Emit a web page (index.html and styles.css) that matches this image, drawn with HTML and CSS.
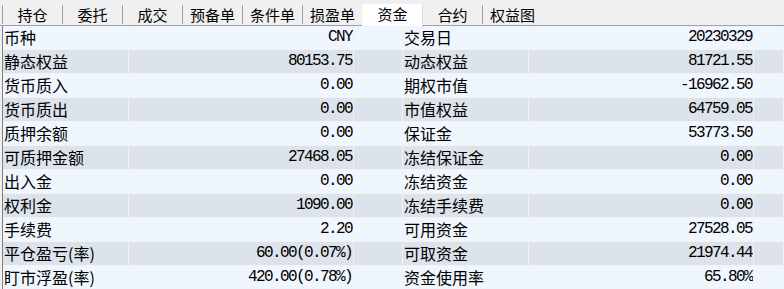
FILE: index.html
```html
<!DOCTYPE html>
<html lang="zh">
<head>
  <meta charset="UTF-8">
  <title>资金</title>
  <link rel="stylesheet" href="styles.css">
</head>
<body>
  <nav class="tabs">
    <a class="tab">持仓</a>
    <a class="tab">委托</a>
    <a class="tab">成交</a>
    <a class="tab">预备单</a>
    <a class="tab">条件单</a>
    <a class="tab">损盈单</a>
    <a class="tab active">资金</a>
    <a class="tab">合约</a>
    <a class="tab">权益图</a>
  </nav>

  <div class="panel" id="funds"></div>

  <script>
    const rows = [
      ['币种', 'CNY', '交易日', '20230329'],
      ['静态权益', '80153.75', '动态权益', '81721.55'],
      ['货币质入', '0.00', '期权市值', '-16962.50'],
      ['货币质出', '0.00', '市值权益', '64759.05'],
      ['质押余额', '0.00', '保证金', '53773.50'],
      ['可质押金额', '27468.05', '冻结保证金', '0.00'],
      ['出入金', '0.00', '冻结资金', '0.00'],
      ['权利金', '1090.00', '冻结手续费', '0.00'],
      ['手续费', '2.20', '可用资金', '27528.05'],
      ['平仓盈亏(率)', '60.00(0.07%)', '可取资金', '21974.44'],
      ['盯市浮盈(率)', '420.00(0.78%)', '资金使用率', '65.80%']
    ];

    const panel = document.getElementById('funds');
    rows.forEach((r, i) => {
      panel.innerHTML += `
        <div class="row ${i % 2 ? 'alt' : ''}">
          <span class="label">${r[0]}</span>
          <span class="value">${r[1]}</span>
          <span></span>
          <span class="label">${r[2]}</span>
          <span class="value">${r[3]}</span>
          <span></span>
        </div>`;
    });
  </script>
</body>
</html>
```

FILE: styles.css
```css
body {
  margin: 0;
  background: #f0f0f0;
  font-family: "Noto Sans CJK SC", sans-serif;
  color: #000;
  overflow: hidden;
}
.tabs {
  display: flex;
  height: 25px;
  padding-left: 2px;
  border-bottom: 1px solid #a0a0a0;
}
.tab {
  width: 60px;
  margin-top: 5px;
  height: 19px;
  border-left: 1px solid #a0a0a0;
  box-sizing: border-box;
  text-align: center;
  font-size: 15px;
  line-height: 19px;
  cursor: pointer;
}
.tab.active {
  margin-top: 4px;
  height: 22px;
  background: #fff;
  border-left-color: #f8f8f8;
  position: relative;
  z-index: 1;
}
.tab.active + .tab {
  border-left-color: #d8d8d8;
}
.panel {
  margin-left: 2px;
  border-left: 1px solid #808080;
}
.row {
  display: grid;
  grid-template-columns: 126px 225px 49px 126px 225px 1fr;
  height: 24px;
  background: #eff6fe;
}
.row.alt {
  background: #dce3ea;
}
.row span {
  box-sizing: border-box;
  border-right: 1px solid #f2f2f2;
  border-bottom: 1px solid #f2f2f2;
  line-height: 23px;
  white-space: nowrap;
  overflow: hidden;
}
.label {
  font-size: 16px;
  padding-left: 1px;
}
.value {
  text-align: right;
  padding-right: 1px;
  font-family: "Liberation Mono", monospace;
  font-size: 16px;
  letter-spacing: -1.6px;
}
```
